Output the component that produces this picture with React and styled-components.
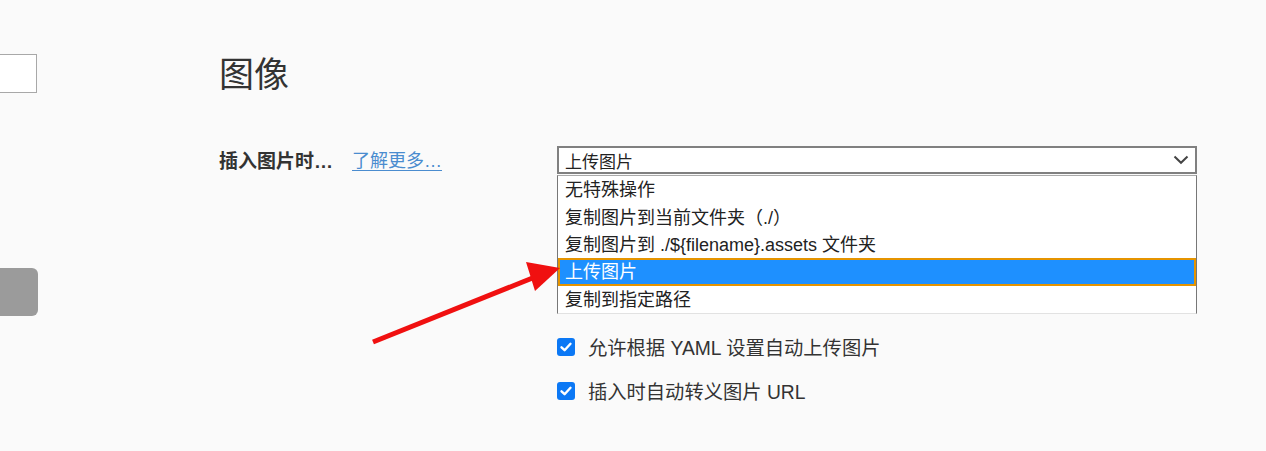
import React from 'react';
import styled, {createGlobalStyle} from "styled-components";

const GlobalStyle = createGlobalStyle`
  html, body {
    margin: 0;
    padding: 0;
    background: #fafafa;
  }
  body {
    font-family: "Liberation Sans", "Noto Sans CJK SC", sans-serif;
    color: #333;
  }
`;

const Page = styled.div`
  position: relative;
  display: flex;
  width: 1266px;
  height: 451px;
  overflow: hidden;
  background: #fafafa;
`;

const Sidebar = styled.div`
  width: 38px;
  display: flex;
  flex-direction: column;
  padding-top: 54px;
`;

const GhostInput = styled.div`
  width: 36px;
  height: 37px;
  background: #fff;
  border: 1px solid #a8a8a8;
  border-left: none;
`;

const GhostButton = styled.div`
  margin-top: 175px;
  width: 38px;
  height: 48px;
  background: #9b9b9b;
  border-radius: 0 6px 6px 0;
`;

const Main = styled.div`
  padding-left: 181px;
  padding-top: 47px;
`;

const Title = styled.h1`
  margin: 0;
  font-size: 35px;
  font-weight: 400;
  line-height: 50px;
  color: #333;
  font-family: "Noto Sans CJK SC", sans-serif;
`;

const Row = styled.div`
  display: flex;
  margin-top: 49px;
`;

const LabelCol = styled.div`
  width: 338px;
  display: flex;
  align-items: center;
  height: 26px;
  gap: 19px;
`;

const Label = styled.span`
  font-size: 19px;
  font-weight: 700;
  color: #333;
  font-family: "Liberation Sans", "Noto Sans CJK SC", sans-serif;
`;

const LearnMore = styled.a`
  font-size: 18px;
  color: #4a8ccf;
  text-decoration: underline;
  text-underline-offset: 3px;
  font-family: "Liberation Sans", "Noto Sans CJK SC", sans-serif;
`;

const Controls = styled.div`
  display: flex;
  flex-direction: column;
  width: 640px;
`;

const SelectWrap = styled.div`
  position: relative;
`;

const SelectBox = styled.div`
  box-sizing: border-box;
  height: 28px;
  border: 2px solid #808080;
  background: #fff;
  display: flex;
  align-items: center;
  justify-content: space-between;
  padding: 0 6px;
  font-size: 17px;
  font-family: "Noto Sans CJK SC", sans-serif;
  color: #222;
`;

const Dropdown = styled.ul`
  position: absolute;
  top: 29px;
  left: 0;
  right: 0;
  margin: 0;
  padding: 0;
  list-style: none;
  background: #fff;
  border: 1px solid #777;
  border-top: 1px solid #aaa;
  border-bottom: 1px solid #e2e2e2;
  z-index: 5;
`;

const Option = styled.li`
  box-sizing: border-box;
  height: 27.4px;
  display: flex;
  align-items: center;
  padding-left: ${(p) => (p.selected ? '5px' : '7px')};
  padding-bottom: 3px;
  font-size: 18px;
  font-family: "Liberation Sans", "Noto Sans CJK SC", sans-serif;
  color: ${(p) => (p.selected ? '#fff' : '#222')};
  background: ${(p) => (p.selected ? '#1e90ff' : '#fff')};
  border: ${(p) => (p.selected ? '2px solid #e59400' : 'none')};
`;

const CheckList = styled.div`
  display: flex;
  flex-direction: column;
  gap: 26px;
  margin-top: 32px;
`;

const CheckRow = styled.label`
  display: flex;
  align-items: center;
  gap: 13px;
  height: 18px;
  font-size: 19.3px;
  color: #333;
  font-family: "Liberation Sans", "Noto Sans CJK SC", sans-serif;
`;

const Box = styled.span`
  width: 18px;
  height: 18px;
  border-radius: 3px;
  background: #0b78f5;
  display: flex;
  align-items: center;
  justify-content: center;
  flex-shrink: 0;
`;

const Overlay = styled.svg`
  position: absolute;
  left: 0;
  top: 0;
  pointer-events: none;
  z-index: 10;
`;

const options = [
    '无特殊操作',
    '复制图片到当前文件夹（./）',
    '复制图片到 ./${filename}.assets 文件夹',
    '上传图片',
    '复制到指定路径',
];

const checks = [
    '优先使用相对路径',
    '为相对路径添加 ./',
    '插入时自动转义图片 URL 的特殊字符',
    '允许根据 YAML 设置自动上传图片',
    '插入时自动转义图片 URL',
];

const Check = () => (
    <Box>
        <svg width="14" height="14" viewBox="0 0 14 14">
            <path d="M2.5 7.3 L5.6 10.2 L11.5 3.8" fill="none" stroke="#fff" strokeWidth="2.4" strokeLinecap="round" strokeLinejoin="round"/>
        </svg>
    </Box>
);

const App = () => {
    return (
        <Page>
            <GlobalStyle/>
            <Sidebar>
                <GhostInput/>
                <GhostButton/>
            </Sidebar>
            <Main>
                <Title>图像</Title>
                <Row>
                    <LabelCol>
                        <Label>插入图片时…</Label>
                        <LearnMore>了解更多…</LearnMore>
                    </LabelCol>
                    <Controls>
                        <SelectWrap>
                            <SelectBox>
                                <span>上传图片</span>
                                <svg width="16" height="10" viewBox="0 0 16 10">
                                    <path d="M1.5 1.5 L8 7.8 L14.5 1.5" fill="none" stroke="#444" strokeWidth="2"/>
                                </svg>
                            </SelectBox>
                            <Dropdown>
                                {options.map((o) => (
                                    <Option key={o} selected={o === '上传图片'}>{o}</Option>
                                ))}
                            </Dropdown>
                        </SelectWrap>
                        <CheckList>
                            {checks.map((c) => (
                                <CheckRow key={c}>
                                    <Check/>
                                    {c}
                                </CheckRow>
                            ))}
                        </CheckList>
                    </Controls>
                </Row>
            </Main>
            <Overlay width="1266" height="451">
                <line x1="373" y1="342" x2="535" y2="277" stroke="#f01010" strokeWidth="5"/>
                <polygon points="526,262 560,268 535,291" fill="#f01010"/>
            </Overlay>
        </Page>
    );
};

export default App;
